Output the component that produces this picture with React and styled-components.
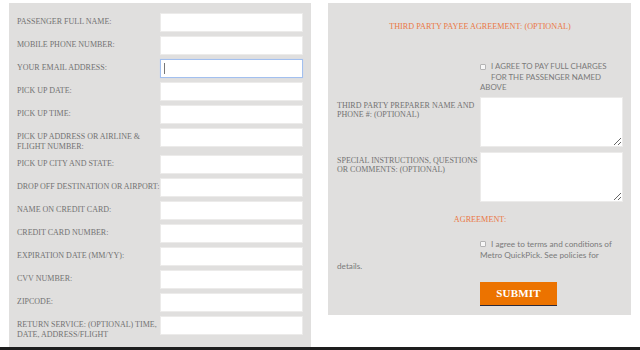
import React from "react";
import styled, { createGlobalStyle } from "styled-components";

const GlobalStyle = createGlobalStyle`
  html, body {
    margin: 0;
    padding: 0;
    background: #ffffff;
  }
  body {
    width: 640px;
    height: 350px;
    overflow: hidden;
  }
`;

const Page = styled.div`
  width: 640px;
  height: 350px;
  display: flex;
  flex-direction: column;
`;

const Columns = styled.div`
  display: flex;
  align-items: flex-start;
  gap: 17px;
  padding: 3px 9px 0 9px;
`;

const Panel = styled.div`
  box-sizing: border-box;
  width: ${props => props.w || "302px"};
  background: #e0dfde;
  padding: ${props => props.pad};
  display: flex;
  flex-direction: column;
`;

const Rows = styled.div`
  display: flex;
  flex-direction: column;
  gap: ${props => props.gap || "4px"};
  margin-top: ${props => props.mt || "0"};
`;

const Row = styled.div`
  display: grid;
  grid-template-columns: 143px 143px;
  align-items: start;
`;

const Label = styled.div`
  padding-top: 4px;
  font-family: "Liberation Serif", "Times New Roman", serif;
  font-size: 8px;
  line-height: 9.5px;
  color: #727272;
  text-transform: uppercase;
  white-space: nowrap;
`;

const Input = styled.input`
  box-sizing: border-box;
  display: block;
  width: 143px;
  height: 19px;
  margin: 0;
  padding: 0 3px;
  background: #ffffff;
  border: 1px solid ${props => (props.focused ? "#a3c0ef" : "#ecebea")};
  box-shadow: ${props => (props.focused ? "0 0 1px 0 #c4d7f6" : "none")};
  border-radius: 0;
  outline: none;
`;

const FocusWrap = styled.div`
  position: relative;
  width: 143px;

  &::after {
    content: "";
    position: absolute;
    left: 4px;
    top: 4px;
    width: 1px;
    height: 11px;
    background: #777777;
  }
`;

const TextArea = styled.textarea`
  box-sizing: border-box;
  display: block;
  width: 143px;
  height: 50px;
  margin: 0;
  padding: 2px 3px;
  background: #ffffff;
  border: 1px solid #ecebea;
  border-radius: 0;
  outline: none;
  resize: both;
`;

const Heading = styled.div`
  font-family: "Liberation Serif", "Times New Roman", serif;
  font-size: 8.2px;
  line-height: 10px;
  color: #ea7845;
  text-align: center;
  margin-top: ${props => props.mt || "0"};
`;

const CheckText = styled.div`
  font-family: Lato, "Open Sans", sans-serif;
  font-size: ${props => props.fs || "7.6px"};
  line-height: ${props => props.lh || "10.5px"};
  color: #7a7a7a;
  white-space: nowrap;
  margin-top: ${props => props.mt || "0"};
  margin-left: ${props => props.ml || "0"};
`;

const Indent = styled.span`
  display: inline-block;
  padding-left: 11px;
`;

const Box = styled.span`
  box-sizing: border-box;
  display: inline-block;
  width: 6px;
  height: 6px;
  margin-right: 5px;
  vertical-align: -0.5px;
  background: #f7f7f7;
  border: 1px solid #b4b4b4;
  border-radius: 1px;
`;

const AgreeGrid = styled.div`
  display: grid;
  grid-template-columns: 143px 143px;
  margin-top: 14px;
`;

const Details = styled(CheckText)`
  grid-column: 1 / 2;
`;

const SubmitRow = styled.div`
  padding-left: 143px;
  margin-top: 10px;
`;

const Submit = styled.button`
  box-sizing: border-box;
  width: 77px;
  height: 24px;
  margin: 0;
  padding: 0;
  background: #ec7300;
  border: none;
  border-bottom: 1px solid #2c2a3a;
  color: #ffffff;
  font-family: "Liberation Serif", "Times New Roman", serif;
  font-weight: bold;
  font-size: 11px;
  letter-spacing: 0.2px;
  cursor: pointer;
`;

const Footer = styled.div`
  flex: 1;
  background: #1e1e1e;
`;

const fields = [
  "Passenger full name:",
  "Mobile phone number:",
  "Your email address:",
  "Pick up date:",
  "Pick up time:",
  ["Pick up address or airline &", "flight number:"],
  "Pick up city and state:",
  "Drop off destination or airport:",
  "Name on credit card:",
  "Credit card number:",
  "Expiration date (mm/yy):",
  "CVV number:",
  "Zipcode:",
  ["Return service: (optional) time,", "date, address/flight"],
];

const renderLabel = text =>
  Array.isArray(text) ? (
    <>
      {text[0]}
      <br />
      {text[1]}
    </>
  ) : (
    text
  );

const App = () => {
  return (
    <Page>
      <GlobalStyle />
      <Columns>
        <Panel w="302px" pad="10px 8px 8px 8px">
          <Rows gap="4px">
            {fields.map((f, i) => (
              <Row key={i}>
                <Label>{renderLabel(f)}</Label>
                {i === 2 ? (
                  <FocusWrap>
                    <Input focused />
                  </FocusWrap>
                ) : (
                  <Input />
                )}
              </Row>
            ))}
          </Rows>
        </Panel>

        <Panel w="303px" pad="19px 8px 9px 9px">
          <Heading>THIRD PARTY PAYEE AGREEMENT: (OPTIONAL)</Heading>
          <CheckText ml="143px" mt="29px" fs="7.9px">
            <Box />
            I AGREE TO PAY FULL CHARGES
            <br />
            <Indent>FOR THE PASSENGER NAMED</Indent>
            <br />
            ABOVE
          </CheckText>
          <Rows gap="5px" mt="4px">
            <Row>
              <Label>
                Third party preparer name and
                <br />
                phone #: (optional)
              </Label>
              <TextArea />
            </Row>
            <Row>
              <Label>
                Special instructions, questions
                <br />
                or comments: (optional)
              </Label>
              <TextArea />
            </Row>
          </Rows>
          <Heading mt="13px">AGREEMENT:</Heading>
          <AgreeGrid>
            <div />
            <CheckText lh="11px" fs="8.2px">
              <Box />
              I agree to terms and conditions of
              <br />
              Metro QuickPick. See policies for
            </CheckText>
            <Details lh="11px" fs="8.2px">
              details.
            </Details>
          </AgreeGrid>
          <SubmitRow>
            <Submit>SUBMIT</Submit>
          </SubmitRow>
        </Panel>
      </Columns>
      <Footer />
    </Page>
  );
};

export default App;
